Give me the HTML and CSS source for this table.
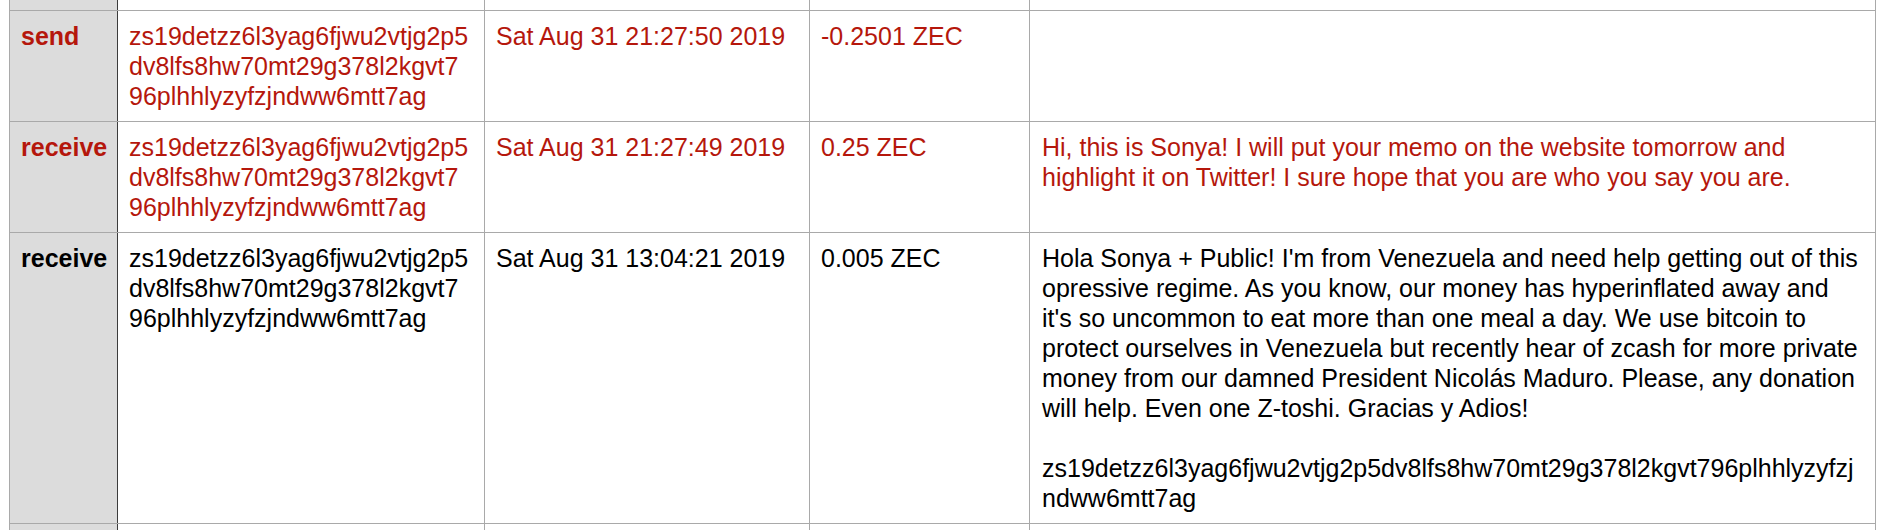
FILE: index.html
```html
<!DOCTYPE html>
<html lang="en">
<head>
<meta charset="utf-8">
<title>Transactions</title>
<link rel="stylesheet" href="styles.css">
</head>
<body>
<table class="tx">
  <colgroup>
    <col class="c-type">
    <col class="c-addr">
    <col class="c-date">
    <col class="c-amt">
    <col class="c-memo">
  </colgroup>
  <tbody>
    <tr class="prev">
      <td class="type"></td>
      <td></td>
      <td></td>
      <td></td>
      <td></td>
    </tr>
    <tr class="red">
      <td class="type">send</td>
      <td class="addr">zs19detzz6l3yag6fjwu2vtjg2p5dv8lfs8hw70mt29g378l2kgvt796plhhlyzyfzjndww6mtt7ag</td>
      <td>Sat Aug 31 21:27:50 2019</td>
      <td>-0.2501 ZEC</td>
      <td class="memo"></td>
    </tr>
    <tr class="red">
      <td class="type">receive</td>
      <td class="addr">zs19detzz6l3yag6fjwu2vtjg2p5dv8lfs8hw70mt29g378l2kgvt796plhhlyzyfzjndww6mtt7ag</td>
      <td>Sat Aug 31 21:27:49 2019</td>
      <td>0.25 ZEC</td>
      <td class="memo">Hi, this is Sonya! I will put your memo on the website tomorrow and highlight it on Twitter! I sure hope that you are who you say you are.</td>
    </tr>
    <tr>
      <td class="type">receive</td>
      <td class="addr">zs19detzz6l3yag6fjwu2vtjg2p5dv8lfs8hw70mt29g378l2kgvt796plhhlyzyfzjndww6mtt7ag</td>
      <td>Sat Aug 31 13:04:21 2019</td>
      <td>0.005 ZEC</td>
      <td class="memo">Hola Sonya + Public! I'm from Venezuela and need help getting out of this opressive regime. As you know, our money has hyperinflated away and it's so uncommon to eat more than one meal a day. We use bitcoin to protect ourselves in Venezuela but recently hear of zcash for more private money from our damned President Nicolás Maduro. Please, any donation will help. Even one Z-toshi. Gracias y Adios!<br><br>zs19detzz6l3yag6fjwu2vtjg2p5dv8lfs8hw70mt29g378l2kgvt796plhhlyzyfzjndww6mtt7ag</td>
    </tr>
    <tr class="next">
      <td class="type"></td>
      <td></td>
      <td></td>
      <td></td>
      <td></td>
    </tr>
  </tbody>
</table>
</body>
</html>
```

FILE: styles.css
```css
html, body {
  margin: 0;
  padding: 0;
  background: #ffffff;
  overflow: hidden;
}

body {
  font-family: "Liberation Sans", Arial, Helvetica, sans-serif;
  font-size: 25px;
  line-height: 30px;
  color: #000000;
}

.tx {
  border-collapse: collapse;
  table-layout: fixed;
  width: 1866px;
  margin: -51px 0 0 9px;
}

.c-type { width: 108px; }
.c-addr { width: 367px; }
.c-date { width: 325px; }
.c-amt  { width: 220px; }
.c-memo { width: 846px; }

.tx td {
  border: 1px solid #a9a9a9;
  padding: 10px 11px 10px 11px;
  vertical-align: top;
  overflow-wrap: anywhere;
}

.tx td.type {
  background: #dcdcdc;
  font-weight: bold;
  border-right: 1px solid #3c3c3c;
  padding-left: 11px;
  padding-right: 4px;
}

.tx td.addr {
  padding-right: 14px;
}

.tx td.memo {
  padding-left: 12px;
  padding-right: 10px;
}

.tx tr.red td {
  color: #b5170c;
}

.tx tr.prev td {
  height: 40px;
}

.tx tr.next td {
  height: 60px;
}
```
